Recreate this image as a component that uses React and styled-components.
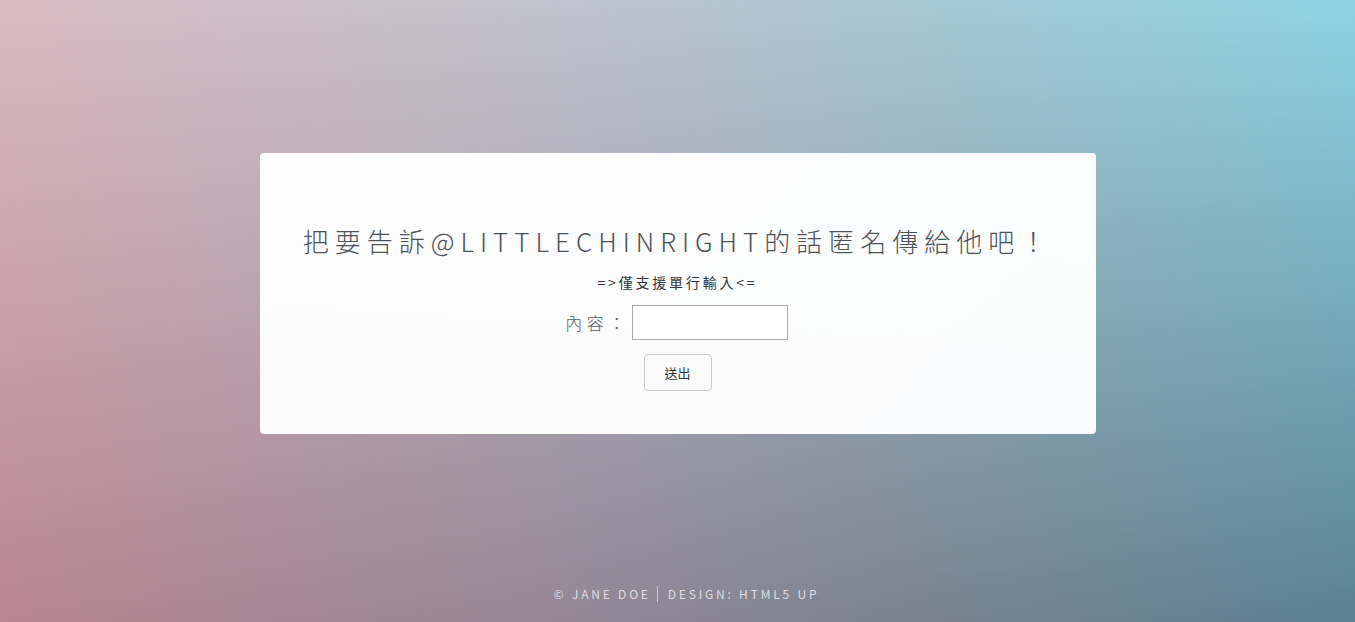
import React, { useState } from 'react';
import styled, { createGlobalStyle } from 'styled-components';

const Global = createGlobalStyle`
  html, body {
    margin: 0;
    padding: 0;
    height: 100%;
  }
  body {
    font-family: "Noto Sans CJK TC", "Noto Sans", sans-serif;
    background: #b5c8d4;
  }
  * {
    box-sizing: border-box;
  }
`;

function App() {
  const [contenido, setContenido] = useState('');

  return (
    <>
      <Global />
      <Fondo>
        <Principal>
          <Tarjeta>
            <Titulo>把要告訴@LITTLECHINRIGHT的話匿名傳給他吧！</Titulo>
            <Aviso>=&gt;僅支援單行輸入&lt;=</Aviso>
            <Fila>
              <Etiqueta htmlFor="contenido">內容：</Etiqueta>
              <Entrada
                id="contenido"
                type="text"
                value={contenido}
                onChange={(e) => setContenido(e.target.value)}
              />
            </Fila>
            <Boton type="button">送出</Boton>
          </Tarjeta>
        </Principal>

        <Pie>
          <li>© Jane Doe</li>
          <li>Design: HTML5 UP</li>
        </Pie>
      </Fondo>
    </>
  );
}

const Fondo = styled.div`
  position: relative;
  min-height: 100vh;
  display: flex;
  flex-direction: column;
  background: linear-gradient(90deg, #dbbbc3 0%, #c1c3cd 40%, #a5c9d6 70%, #8fd4e4 100%);
  isolation: isolate;

  /* bottom row of the four-corner gradient, faded in from the top */
  &::before {
    content: "";
    position: absolute;
    inset: 0;
    z-index: -1;
    background: linear-gradient(90deg, #b88590 0%, #968696 40%, #76838f 70%, #5a8194 100%);
    -webkit-mask-image: linear-gradient(180deg, transparent 0%, #000 100%);
    mask-image: linear-gradient(180deg, transparent 0%, #000 100%);
  }
`;

const Principal = styled.main`
  flex: 1;
  display: flex;
  align-items: center;
  justify-content: center;
`;

const Tarjeta = styled.section`
  width: 836px;
  background: rgba(255, 255, 255, 0.96);
  border-radius: 4px;
  padding: 68px 30px 43px;
  display: flex;
  flex-direction: column;
  align-items: center;
`;

const Titulo = styled.h1`
  margin: 0;
  font-size: 26px;
  line-height: 39px;
  font-weight: 300;
  letter-spacing: 6px;
  color: #4b5259;
  text-align: center;
`;

const Aviso = styled.p`
  margin: 12px 0 0;
  font-size: 14px;
  line-height: 21px;
  letter-spacing: 2.8px;
  color: #2f3439;
`;

const Fila = styled.div`
  margin-top: 12px;
  display: flex;
  align-items: center;
  gap: 2px;
  margin-right: 2px;
`;

const Etiqueta = styled.label`
  font-size: 17px;
  font-weight: 300;
  letter-spacing: 4.5px;
  color: #585d62;
`;

const Entrada = styled.input`
  width: 156px;
  height: 35px;
  border: 1px solid #a9a9a9;
  background: #fff;
  padding: 0 6px;
  font-size: 14px;
  outline: none;
`;

const Boton = styled.button`
  margin-top: 14px;
  width: 68px;
  height: 37px;
  border: 1px solid #c8ccd0;
  border-radius: 4px;
  background: #fbfbfc;
  color: #333;
  font-family: inherit;
  font-size: 13px;
  cursor: pointer;
`;

const Pie = styled.ul`
  list-style: none;
  margin: 0;
  padding: 0 0 20px 18px;
  display: flex;
  justify-content: center;
  font-size: 12px;
  line-height: 22px;
  letter-spacing: 2.8px;
  text-transform: uppercase;
  color: rgba(255, 255, 255, 0.72);

  li {
    line-height: 16px;
    align-self: center;
  }
  li + li {
    border-left: 1px solid rgba(255, 255, 255, 0.55);
    margin-left: 6px;
    padding-left: 10px;
  }
`;

export default App;
